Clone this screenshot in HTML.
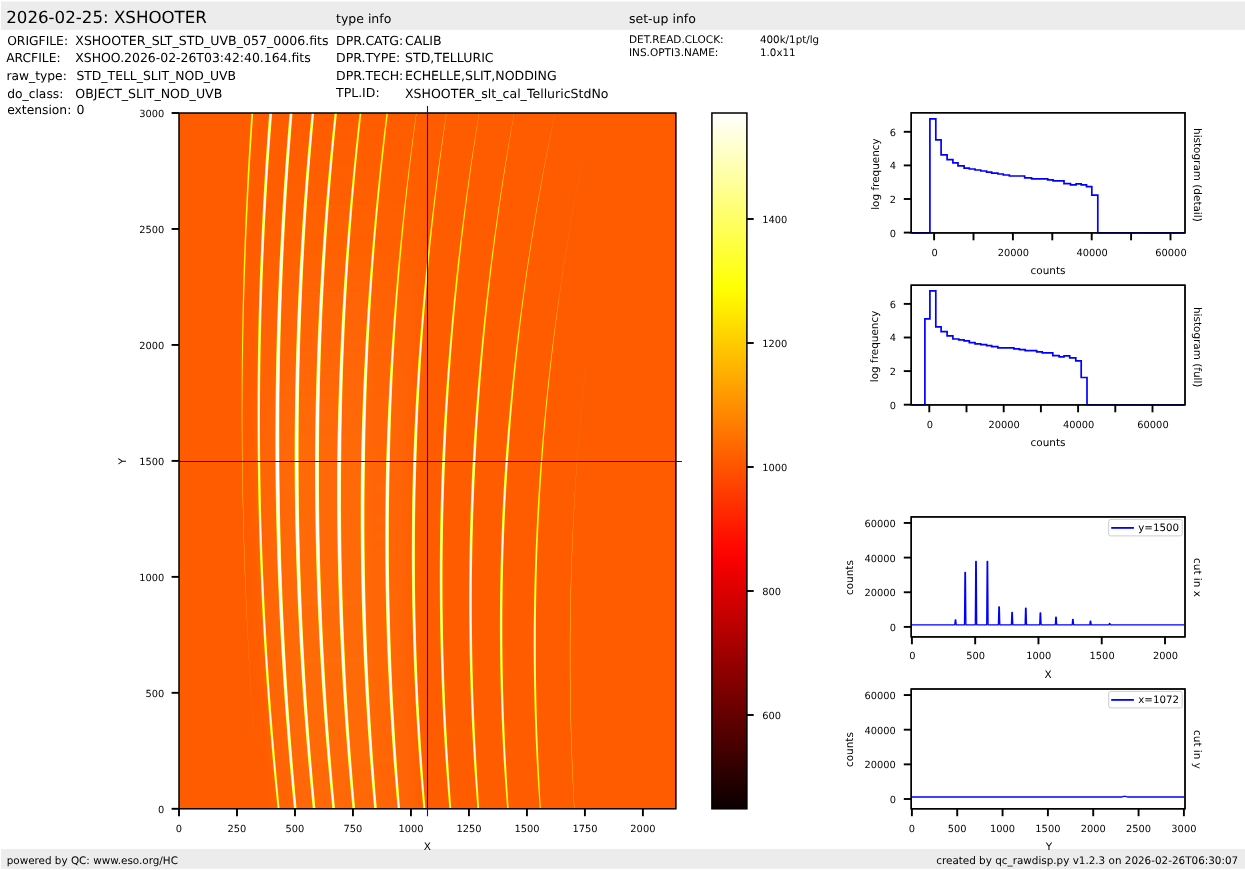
<!DOCTYPE html>
<html lang="en"><head><meta charset="utf-8"><title>XSHOOTER raw display</title>
<style>html,body{margin:0;padding:0;background:#fff}svg{display:block;will-change:transform;text-rendering:geometricPrecision}text{font-family:"DejaVu Sans", "Liberation Sans", sans-serif;fill:#000}</style></head><body>
<svg width="1245" height="870" viewBox="0 0 1245 870">
<defs>
<linearGradient id="cb" x1="0" y1="1" x2="0" y2="0"><stop offset="0.000" stop-color="#0b0000"/><stop offset="0.025" stop-color="#1b0000"/><stop offset="0.050" stop-color="#2c0000"/><stop offset="0.075" stop-color="#3d0000"/><stop offset="0.100" stop-color="#4e0000"/><stop offset="0.125" stop-color="#5e0000"/><stop offset="0.150" stop-color="#6f0000"/><stop offset="0.175" stop-color="#800000"/><stop offset="0.200" stop-color="#900000"/><stop offset="0.225" stop-color="#a10000"/><stop offset="0.250" stop-color="#b20000"/><stop offset="0.275" stop-color="#c30000"/><stop offset="0.300" stop-color="#d30000"/><stop offset="0.325" stop-color="#e40000"/><stop offset="0.350" stop-color="#f50000"/><stop offset="0.375" stop-color="#ff0700"/><stop offset="0.400" stop-color="#ff1700"/><stop offset="0.425" stop-color="#ff2800"/><stop offset="0.450" stop-color="#ff3900"/><stop offset="0.475" stop-color="#ff4a00"/><stop offset="0.500" stop-color="#ff5a00"/><stop offset="0.525" stop-color="#ff6b00"/><stop offset="0.550" stop-color="#ff7c00"/><stop offset="0.575" stop-color="#ff8d00"/><stop offset="0.600" stop-color="#ff9d00"/><stop offset="0.625" stop-color="#ffae00"/><stop offset="0.650" stop-color="#ffbf00"/><stop offset="0.675" stop-color="#ffcf00"/><stop offset="0.700" stop-color="#ffe000"/><stop offset="0.725" stop-color="#fff100"/><stop offset="0.750" stop-color="#ffff04"/><stop offset="0.775" stop-color="#ffff1d"/><stop offset="0.800" stop-color="#ffff36"/><stop offset="0.825" stop-color="#ffff4f"/><stop offset="0.850" stop-color="#ffff68"/><stop offset="0.875" stop-color="#ffff81"/><stop offset="0.900" stop-color="#ffff9b"/><stop offset="0.925" stop-color="#ffffb4"/><stop offset="0.950" stop-color="#ffffcd"/><stop offset="0.975" stop-color="#ffffe6"/><stop offset="1.000" stop-color="#ffffff"/></linearGradient>
<clipPath id="imclip"><rect x="179.0" y="113.0" width="496.9" height="695.8"/></clipPath>
<linearGradient id="fadeTop" gradientUnits="userSpaceOnUse" x1="0" y1="113" x2="0" y2="808"><stop offset="0" stop-color="#fff" stop-opacity="0.25"/><stop offset="0.35" stop-color="#fff" stop-opacity="1"/><stop offset="1" stop-color="#fff" stop-opacity="1"/></linearGradient>
<filter id="blur8" x="-20%" y="-20%" width="140%" height="140%"><feGaussianBlur stdDeviation="7 2"/></filter>
<filter id="blur1"><feGaussianBlur stdDeviation="0.6"/></filter>
</defs>
<rect x="0" y="0" width="1245" height="870" fill="#ffffff"/>
<rect x="1" y="1.5" width="1244" height="28.3" fill="#ececec"/>
<rect x="1" y="849" width="1244" height="19.8" fill="#ececec"/>
<text x="6.2" y="23.1" font-size="16.67" text-anchor="start">2026-02-25: XSHOOTER</text>
<text x="336" y="23" font-size="12.5" text-anchor="start">type info</text>
<text x="629" y="23" font-size="12.5" text-anchor="start">set-up info</text>
<text x="7.2" y="44.8" font-size="12.3" text-anchor="start">ORIGFILE:</text>
<text x="75.3" y="44.8" font-size="12.55" text-anchor="start">XSHOOTER_SLT_STD_UVB_057_0006.fits</text>
<text x="6.2" y="61.9" font-size="12.3" text-anchor="start">ARCFILE:</text>
<text x="75.3" y="61.9" font-size="12.45" text-anchor="start">XSHOO.2026-02-26T03:42:40.164.fits</text>
<text x="6.4" y="80.0" font-size="12.3" text-anchor="start">raw_type:</text>
<text x="76.4" y="80.0" font-size="12.4" text-anchor="start">STD_TELL_SLIT_NOD_UVB</text>
<text x="7.2" y="97.5" font-size="12.3" text-anchor="start">do_class:</text>
<text x="75.3" y="97.5" font-size="12.55" text-anchor="start">OBJECT_SLIT_NOD_UVB</text>
<text x="7.2" y="114.1" font-size="12.3" text-anchor="start">extension:</text>
<text x="76.4" y="114.1" font-size="12.55" text-anchor="start">0</text>
<text x="336" y="44.8" font-size="12.5" text-anchor="start">DPR.CATG:</text>
<text x="405" y="44.8" font-size="12.55" text-anchor="start">CALIB</text>
<text x="336" y="61.9" font-size="12.5" text-anchor="start">DPR.TYPE:</text>
<text x="405" y="61.9" font-size="12.55" text-anchor="start">STD,TELLURIC</text>
<text x="336" y="80.0" font-size="12.5" text-anchor="start">DPR.TECH:</text>
<text x="405" y="80.0" font-size="12.55" text-anchor="start">ECHELLE,SLIT,NODDING</text>
<text x="336" y="96.60000000000001" font-size="12.5" text-anchor="start">TPL.ID:</text>
<text x="405" y="97.9" font-size="12.55" text-anchor="start">XSHOOTER_slt_cal_TelluricStdNo</text>
<text x="629" y="43" font-size="10.5" text-anchor="start">DET.READ.CLOCK:</text>
<text x="760" y="43" font-size="10.3" text-anchor="start">400k/1pt/lg</text>
<text x="629" y="55.8" font-size="10.5" text-anchor="start">INS.OPTI3.NAME:</text>
<text x="760" y="55.8" font-size="10.3" text-anchor="start">1.0x11</text>
<text x="6.7" y="863.9" font-size="10.4" text-anchor="start">powered by QC: www.eso.org/HC</text>
<text x="1238.2" y="863.9" font-size="10.4" text-anchor="end">created by qc_rawdisp.py v1.2.3 on 2026-02-26T06:30:07</text>
<rect x="179.0" y="113.0" width="496.9" height="695.8" fill="#ff5c00"/>
<g clip-path="url(#imclip)">
<linearGradient id="glowv" gradientUnits="userSpaceOnUse" x1="0" y1="113" x2="0" y2="808.5"><stop offset="0" stop-color="#ff7c16" stop-opacity="0.04"/><stop offset="0.2" stop-color="#ff7c16" stop-opacity="0.22"/><stop offset="0.45" stop-color="#ff7c16" stop-opacity="0.5"/><stop offset="0.75" stop-color="#ff7c16" stop-opacity="0.6"/><stop offset="1" stop-color="#ff7c16" stop-opacity="0.5"/></linearGradient>
<path d="M271.2 83.0 L269.0 109.1 L267.0 135.1 L265.2 161.2 L263.6 187.2 L262.1 213.3 L260.8 239.4 L259.7 265.4 L258.8 291.5 L258.0 317.6 L257.4 343.6 L257.0 369.7 L256.8 395.7 L256.7 421.8 L256.9 447.9 L257.2 473.9 L257.6 500.0 L258.3 526.1 L259.1 552.1 L260.1 578.2 L261.3 604.2 L262.6 630.3 L264.2 656.4 L265.9 682.4 L267.8 708.5 L269.8 734.6 L272.0 760.6 L274.4 786.7 L277.0 812.7 L279.8 838.8 L421.2 838.8 L418.8 812.7 L416.6 786.7 L414.6 760.6 L412.9 734.6 L411.4 708.5 L410.2 682.4 L409.1 656.4 L408.3 630.3 L407.8 604.2 L407.4 578.2 L407.3 552.1 L407.5 526.1 L407.8 500.0 L408.4 473.9 L409.3 447.9 L410.3 421.8 L411.6 395.7 L413.1 369.7 L414.9 343.6 L416.9 317.6 L419.1 291.5 L421.5 265.4 L424.2 239.4 L427.1 213.3 L430.3 187.2 L433.6 161.2 L437.3 135.1 L441.1 109.1 L445.2 83.0Z" fill="url(#glowv)" opacity="0.55" filter="url(#blur8)"/>
<path d="M297.8 83.0 L295.4 109.1 L293.3 135.1 L291.3 161.2 L289.5 187.2 L287.9 213.3 L286.5 239.4 L285.2 265.4 L284.1 291.5 L283.2 317.6 L282.5 343.6 L281.9 369.7 L281.6 395.7 L281.4 421.8 L281.3 447.9 L281.5 473.9 L281.8 500.0 L282.3 526.1 L283.0 552.1 L283.9 578.2 L285.0 604.2 L286.2 630.3 L287.6 656.4 L289.2 682.4 L290.9 708.5 L292.8 734.6 L295.0 760.6 L297.2 786.7 L299.7 812.7 L302.4 838.8 L384.3 838.8 L381.9 812.7 L379.6 786.7 L377.6 760.6 L375.8 734.6 L374.2 708.5 L372.7 682.4 L371.5 656.4 L370.5 630.3 L369.7 604.2 L369.1 578.2 L368.7 552.1 L368.6 526.1 L368.6 500.0 L368.8 473.9 L369.3 447.9 L369.9 421.8 L370.7 395.7 L371.8 369.7 L373.1 343.6 L374.5 317.6 L376.2 291.5 L378.1 265.4 L380.2 239.4 L382.5 213.3 L385.0 187.2 L387.7 161.2 L390.6 135.1 L393.7 109.1 L397.0 83.0Z" fill="url(#glowv)" opacity="0.35" filter="url(#blur8)"/>
<path d="M251.47 112.0L250.68 123.8L249.93 135.7L249.22 147.5L248.53 159.3L247.88 171.1L247.26 183.0L246.67 194.8L246.11 206.6L245.58 218.4L245.09 230.3L244.63 242.1L244.20 253.9L243.80 265.8L243.44 277.6L243.11 289.4L242.82 301.2L242.57 313.1L242.34 324.9L242.15 336.7L242.00 348.5L241.87 360.4L241.78 372.2L241.72 384.0L241.69 395.9L241.69 407.7L241.72 419.5L241.79 431.3L241.89 443.2L242.02 455.0L242.17 466.8L242.34 478.6L242.55 490.5L242.78 502.3L243.05 514.1L243.36 525.9L243.69 537.8L244.05 549.6L244.45 561.4L244.88 573.3L245.34 585.1L245.84 596.9L246.36 608.7L246.92 620.6L247.51 632.4L248.13 644.2L248.78 656.0L249.46 667.9L250.17 679.7L250.92 691.5L251.70 703.4L252.51 715.2L253.35 727.0L254.22 738.8L254.24 738.8L253.38 727.0L252.55 715.2L251.75 703.4L250.98 691.5L250.25 679.7L249.55 667.9L248.88 656.0L248.24 644.2L247.63 632.4L247.06 620.6L246.52 608.7L246.02 596.9L245.54 585.1L245.10 573.3L244.69 561.4L244.31 549.6L243.96 537.8L243.65 525.9L243.37 514.1L243.12 502.3L242.90 490.5L242.71 478.6L242.56 466.8L242.45 455.0L242.38 443.2L242.35 431.3L242.34 419.5L242.37 407.7L242.43 395.9L242.52 384.0L242.65 372.2L242.80 360.4L242.99 348.5L243.21 336.7L243.46 324.9L243.75 313.1L244.07 301.2L244.41 289.4L244.78 277.6L245.18 265.8L245.61 253.9L246.07 242.1L246.57 230.3L247.09 218.4L247.65 206.6L248.24 194.8L248.86 183.0L249.52 171.1L250.21 159.3L250.92 147.5L251.67 135.7L252.46 123.8L253.27 112.0ZM269.27 112.0L268.37 123.8L267.49 135.7L266.66 147.5L265.86 159.3L265.09 171.1L264.37 183.0L263.68 194.8L263.02 206.6L262.40 218.4L261.82 230.3L261.27 242.1L260.76 253.9L260.29 265.8L259.85 277.6L259.45 289.4L259.09 301.2L258.77 313.1L258.48 324.9L258.23 336.7L258.02 348.5L257.84 360.4L257.70 372.2L257.60 384.0L257.53 395.9L257.49 407.7L257.50 419.5L257.54 431.3L257.61 443.2L257.73 455.0L257.87 466.8L258.03 478.6L258.24 490.5L258.48 502.3L258.76 514.1L259.07 525.9L259.42 537.8L259.80 549.6L260.23 561.4L260.68 573.3L261.18 585.1L261.71 596.9L262.27 608.7L262.88 620.6L263.52 632.4L264.20 644.2L264.92 656.0L265.68 667.9L266.47 679.7L267.30 691.5L268.17 703.4L269.07 715.2L270.01 727.0L270.99 738.8L272.00 750.7L273.05 762.5L274.17 774.3L275.32 786.1L276.51 798.0L277.73 809.8L279.74 809.8L278.59 798.0L277.48 786.1L276.40 774.3L275.37 762.5L274.34 750.7L273.34 738.8L272.38 727.0L271.46 715.2L270.57 703.4L269.72 691.5L268.90 679.7L268.12 667.9L267.38 656.0L266.67 644.2L266.00 632.4L265.35 620.6L264.75 608.7L264.17 596.9L263.64 585.1L263.14 573.3L262.67 561.4L262.25 549.6L261.86 537.8L261.50 525.9L261.18 514.1L260.90 502.3L260.65 490.5L260.44 478.6L260.27 466.8L260.14 455.0L260.05 443.2L260.01 431.3L259.99 419.5L260.02 407.7L260.08 395.9L260.17 384.0L260.31 372.2L260.47 360.4L260.68 348.5L260.92 336.7L261.20 324.9L261.51 313.1L261.86 301.2L262.25 289.4L262.66 277.6L263.11 265.8L263.60 253.9L264.13 242.1L264.69 230.3L265.28 218.4L265.92 206.6L266.59 194.8L267.29 183.0L268.03 171.1L268.81 159.3L269.62 147.5L270.47 135.7L271.36 123.8L272.28 112.0ZM289.68 112.0L288.67 123.8L287.70 135.7L286.77 147.5L285.87 159.3L285.00 171.1L284.18 183.0L283.39 194.8L282.64 206.6L281.92 218.4L281.24 230.3L280.60 242.1L279.99 253.9L279.42 265.8L278.89 277.6L278.39 289.4L277.94 301.2L277.52 313.1L277.14 324.9L276.80 336.7L276.49 348.5L276.22 360.4L275.99 372.2L275.79 384.0L275.63 395.9L275.51 407.7L275.42 419.5L275.37 431.3L275.35 443.2L275.37 455.0L275.44 466.8L275.57 478.6L275.73 490.5L275.92 502.3L276.15 514.1L276.42 525.9L276.72 537.8L277.07 549.6L277.44 561.4L277.86 573.3L278.31 585.1L278.80 596.9L279.32 608.7L279.88 620.6L280.48 632.4L281.12 644.2L281.80 656.0L282.52 667.9L283.28 679.7L284.07 691.5L284.90 703.4L285.77 715.2L286.67 727.0L287.61 738.8L288.59 750.7L289.60 762.5L290.67 774.3L291.78 786.1L292.92 798.0L294.10 809.8L296.75 809.8L295.66 798.0L294.62 786.1L293.61 774.3L292.63 762.5L291.68 750.7L290.75 738.8L289.87 727.0L289.02 715.2L288.20 703.4L287.43 691.5L286.69 679.7L285.98 667.9L285.32 656.0L284.69 644.2L284.09 632.4L283.52 620.6L282.98 608.7L282.49 596.9L282.03 585.1L281.60 573.3L281.21 561.4L280.86 549.6L280.55 537.8L280.27 525.9L280.03 514.1L279.83 502.3L279.66 490.5L279.53 478.6L279.43 466.8L279.36 455.0L279.31 443.2L279.30 431.3L279.32 419.5L279.38 407.7L279.48 395.9L279.61 384.0L279.78 372.2L279.99 360.4L280.24 348.5L280.52 336.7L280.83 324.9L281.19 313.1L281.58 301.2L282.00 289.4L282.46 277.6L282.95 265.8L283.48 253.9L284.05 242.1L284.65 230.3L285.29 218.4L285.97 206.6L286.68 194.8L287.43 183.0L288.21 171.1L289.03 159.3L289.89 147.5L290.79 135.7L291.72 123.8L292.69 112.0ZM311.67 112.0L310.53 123.8L309.43 135.7L308.36 147.5L307.34 159.3L306.35 171.1L305.40 183.0L304.50 194.8L303.63 206.6L302.80 218.4L302.01 230.3L301.25 242.1L300.54 253.9L299.87 265.8L299.23 277.6L298.64 289.4L298.10 301.2L297.60 313.1L297.13 324.9L296.71 336.7L296.32 348.5L295.97 360.4L295.66 372.2L295.40 384.0L295.17 395.9L294.97 407.7L294.82 419.5L294.71 431.3L294.64 443.2L294.60 455.0L294.62 466.8L294.69 478.6L294.81 490.5L294.96 502.3L295.15 514.1L295.38 525.9L295.65 537.8L295.96 549.6L296.30 561.4L296.69 573.3L297.12 585.1L297.58 596.9L298.08 608.7L298.63 620.6L299.21 632.4L299.84 644.2L300.51 656.0L301.22 667.9L301.97 679.7L302.76 691.5L303.59 703.4L304.46 715.2L305.37 727.0L306.31 738.8L307.30 750.7L308.33 762.5L309.41 774.3L310.54 786.1L311.70 798.0L312.90 809.8L315.56 809.8L314.44 798.0L313.38 786.1L312.35 774.3L311.36 762.5L310.39 750.7L309.46 738.8L308.57 727.0L307.71 715.2L306.89 703.4L306.12 691.5L305.38 679.7L304.68 667.9L304.02 656.0L303.40 644.2L302.82 632.4L302.26 620.6L301.75 608.7L301.27 596.9L300.83 585.1L300.43 573.3L300.07 561.4L299.75 549.6L299.47 537.8L299.23 525.9L299.03 514.1L298.86 502.3L298.74 490.5L298.65 478.6L298.61 466.8L298.59 455.0L298.59 443.2L298.63 431.3L298.71 419.5L298.83 407.7L298.99 395.9L299.18 384.0L299.42 372.2L299.70 360.4L300.01 348.5L300.36 336.7L300.76 324.9L301.19 313.1L301.66 301.2L302.17 289.4L302.71 277.6L303.29 265.8L303.90 253.9L304.55 242.1L305.25 230.3L305.98 218.4L306.75 206.6L307.56 194.8L308.41 183.0L309.29 171.1L310.22 159.3L311.19 147.5L312.19 135.7L313.24 123.8L314.32 112.0ZM334.74 112.0L333.48 123.8L332.26 135.7L331.08 147.5L329.94 159.3L328.85 171.1L327.79 183.0L326.78 194.8L325.80 206.6L324.87 218.4L323.98 230.3L323.13 242.1L322.32 253.9L321.55 265.8L320.82 277.6L320.14 289.4L319.51 301.2L318.92 313.1L318.37 324.9L317.86 336.7L317.39 348.5L316.97 360.4L316.58 372.2L316.24 384.0L315.93 395.9L315.67 407.7L315.45 419.5L315.27 431.3L315.13 443.2L315.03 455.0L315.00 466.8L315.01 478.6L315.08 490.5L315.18 502.3L315.32 514.1L315.50 525.9L315.73 537.8L315.99 549.6L316.30 561.4L316.65 573.3L317.04 585.1L317.47 596.9L317.94 608.7L318.45 620.6L319.00 632.4L319.61 644.2L320.25 656.0L320.94 667.9L321.67 679.7L322.44 691.5L323.26 703.4L324.11 715.2L325.00 727.0L325.94 738.8L326.92 750.7L327.94 762.5L329.02 774.3L330.14 786.1L331.30 798.0L332.50 809.8L335.16 809.8L334.04 798.0L332.98 786.1L331.95 774.3L330.97 762.5L330.01 750.7L329.08 738.8L328.20 727.0L327.36 715.2L326.56 703.4L325.80 691.5L325.08 679.7L324.40 667.9L323.76 656.0L323.17 644.2L322.61 632.4L322.09 620.6L321.60 608.7L321.16 596.9L320.75 585.1L320.39 573.3L320.07 561.4L319.79 549.6L319.55 537.8L319.35 525.9L319.20 514.1L319.08 502.3L319.01 490.5L318.97 478.6L318.98 466.8L319.01 455.0L319.07 443.2L319.16 431.3L319.30 419.5L319.48 407.7L319.70 395.9L319.96 384.0L320.26 372.2L320.60 360.4L320.98 348.5L321.41 336.7L321.87 324.9L322.38 313.1L322.93 301.2L323.51 289.4L324.13 277.6L324.79 265.8L325.49 253.9L326.23 242.1L327.01 230.3L327.83 218.4L328.69 206.6L329.60 194.8L330.54 183.0L331.53 171.1L332.55 159.3L333.62 147.5L334.73 135.7L335.88 123.8L337.07 112.0ZM359.73 112.0L358.37 123.8L357.06 135.7L355.78 147.5L354.55 159.3L353.36 171.1L352.21 183.0L351.10 194.8L350.03 206.6L349.00 218.4L348.02 230.3L347.08 242.1L346.18 253.9L345.32 265.8L344.50 277.6L343.72 289.4L342.99 301.2L342.30 313.1L341.66 324.9L341.05 336.7L340.49 348.5L339.97 360.4L339.49 372.2L339.05 384.0L338.65 395.9L338.29 407.7L337.98 419.5L337.71 431.3L337.47 443.2L337.28 455.0L337.16 466.8L337.10 478.6L337.08 490.5L337.11 502.3L337.17 514.1L337.28 525.9L337.43 537.8L337.62 549.6L337.85 561.4L338.13 573.3L338.44 585.1L338.80 596.9L339.20 608.7L339.64 620.6L340.12 632.4L340.65 644.2L341.23 656.0L341.85 667.9L342.51 679.7L343.21 691.5L343.95 703.4L344.74 715.2L345.56 727.0L346.43 738.8L347.34 750.7L348.29 762.5L349.31 774.3L350.36 786.1L351.46 798.0L352.60 809.8L355.25 809.8L354.20 798.0L353.20 786.1L352.24 774.3L351.32 762.5L350.43 750.7L349.57 738.8L348.76 727.0L347.98 715.2L347.25 703.4L346.56 691.5L345.91 679.7L345.30 667.9L344.74 656.0L344.21 644.2L343.73 632.4L343.27 620.6L342.86 608.7L342.49 596.9L342.16 585.1L341.87 573.3L341.62 561.4L341.42 549.6L341.26 537.8L341.13 525.9L341.05 514.1L341.01 502.3L341.02 490.5L341.06 478.6L341.15 466.8L341.25 455.0L341.37 443.2L341.53 431.3L341.73 419.5L341.98 407.7L342.26 395.9L342.59 384.0L342.96 372.2L343.37 360.4L343.82 348.5L344.31 336.7L344.85 324.9L345.42 313.1L346.04 301.2L346.70 289.4L347.40 277.6L348.14 265.8L348.91 253.9L349.73 242.1L350.60 230.3L351.50 218.4L352.44 206.6L353.43 194.8L354.46 183.0L355.53 171.1L356.64 159.3L357.79 147.5L358.98 135.7L360.22 123.8L361.50 112.0ZM386.66 112.0L385.19 123.8L383.76 135.7L382.38 147.5L381.03 159.3L379.73 171.1L378.47 183.0L377.26 194.8L376.08 206.6L374.95 218.4L373.86 230.3L372.81 242.1L371.81 253.9L370.85 265.8L369.93 277.6L369.05 289.4L368.21 301.2L367.42 313.1L366.67 324.9L365.96 336.7L365.29 348.5L364.67 360.4L364.08 372.2L363.54 384.0L363.05 395.9L362.59 407.7L362.18 419.5L361.81 431.3L361.48 443.2L361.19 455.0L360.98 466.8L360.83 478.6L360.73 490.5L360.67 502.3L360.65 514.1L360.67 525.9L360.74 537.8L360.84 549.6L360.99 561.4L361.19 573.3L361.42 585.1L361.70 596.9L362.02 608.7L362.38 620.6L362.79 632.4L363.25 644.2L363.75 656.0L364.30 667.9L364.89 679.7L365.53 691.5L366.21 703.4L366.92 715.2L367.69 727.0L368.49 738.8L369.33 750.7L370.23 762.5L371.18 774.3L372.18 786.1L373.21 798.0L374.29 809.8L376.94 809.8L375.95 798.0L375.01 786.1L374.11 774.3L373.26 762.5L372.42 750.7L371.63 738.8L370.88 727.0L370.17 715.2L369.50 703.4L368.88 691.5L368.30 679.7L367.76 667.9L367.26 656.0L366.81 644.2L366.39 632.4L366.01 620.6L365.66 608.7L365.36 596.9L365.10 585.1L364.89 573.3L364.71 561.4L364.58 549.6L364.49 537.8L364.44 525.9L364.44 514.1L364.48 502.3L364.56 490.5L364.68 478.6L364.85 466.8L365.03 455.0L365.23 443.2L365.46 431.3L365.74 419.5L366.07 407.7L366.43 395.9L366.84 384.0L367.29 372.2L367.79 360.4L368.32 348.5L368.90 336.7L369.52 324.9L370.18 313.1L370.89 301.2L371.64 289.4L372.43 277.6L373.26 265.8L374.14 253.9L375.06 242.1L376.02 230.3L377.03 218.4L378.08 206.6L379.17 194.8L380.30 183.0L381.47 171.1L382.69 159.3L383.95 147.5L385.25 135.7L386.60 123.8L387.99 112.0ZM416.42 112.0L414.75 123.8L413.13 135.7L411.55 147.5L410.02 159.3L408.53 171.1L407.09 183.0L405.69 194.8L404.34 206.6L403.04 218.4L401.78 230.3L400.56 242.1L399.39 253.9L398.27 265.8L397.19 277.6L396.16 289.4L395.16 301.2L394.22 313.1L393.31 324.9L392.46 336.7L391.65 348.5L390.88 360.4L390.16 372.2L389.49 384.0L388.86 395.9L388.27 407.7L387.74 419.5L387.24 431.3L386.80 443.2L386.39 455.0L386.07 466.8L385.82 478.6L385.62 490.5L385.46 502.3L385.35 514.1L385.28 525.9L385.26 537.8L385.28 549.6L385.35 561.4L385.46 573.3L385.62 585.1L385.83 596.9L386.08 608.7L386.38 620.6L386.72 632.4L387.12 644.2L387.58 656.0L388.08 667.9L388.63 679.7L389.22 691.5L389.86 703.4L390.54 715.2L391.27 727.0L392.04 738.8L392.86 750.7L393.73 762.5L394.68 774.3L395.66 786.1L396.70 798.0L397.77 809.8L400.26 809.8L399.29 798.0L398.38 786.1L397.50 774.3L396.68 762.5L395.87 750.7L395.10 738.8L394.38 727.0L393.71 715.2L393.08 703.4L392.49 691.5L391.95 679.7L391.46 667.9L391.01 656.0L390.60 644.2L390.24 632.4L389.90 620.6L389.61 608.7L389.37 596.9L389.17 585.1L389.01 573.3L388.90 561.4L388.84 549.6L388.82 537.8L388.85 525.9L388.92 514.1L389.04 502.3L389.20 490.5L389.41 478.6L389.67 466.8L389.93 455.0L390.22 443.2L390.55 431.3L390.92 419.5L391.34 407.7L391.80 395.9L392.31 384.0L392.87 372.2L393.47 360.4L394.12 348.5L394.81 336.7L395.54 324.9L396.33 313.1L397.15 301.2L398.03 289.4L398.95 277.6L399.92 265.8L400.94 253.9L402.00 242.1L403.10 230.3L404.25 218.4L405.45 206.6L406.69 194.8L407.98 183.0L409.31 171.1L410.69 159.3L412.11 147.5L413.58 135.7L415.10 123.8L416.66 112.0ZM446.57 112.0L444.75 123.8L442.98 135.7L441.25 147.5L439.57 159.3L437.94 171.1L436.36 183.0L434.82 194.8L433.33 206.6L431.89 218.4L430.50 230.3L429.16 242.1L427.86 253.9L426.61 265.8L425.41 277.6L424.26 289.4L423.17 301.2L422.14 313.1L421.15 324.9L420.21 336.7L419.32 348.5L418.47 360.4L417.67 372.2L416.92 384.0L416.22 395.9L415.57 407.7L414.96 419.5L414.40 431.3L413.89 443.2L413.43 455.0L413.03 466.8L412.72 478.6L412.44 490.5L412.22 502.3L412.04 514.1L411.92 525.9L411.84 537.8L411.80 549.6L411.82 561.4L411.88 573.3L411.99 585.1L412.15 596.9L412.35 608.7L412.61 620.6L412.91 632.4L413.26 644.2L413.67 656.0L414.12 667.9L414.62 679.7L415.16 691.5L415.76 703.4L416.40 715.2L417.09 727.0L417.83 738.8L418.61 750.7L419.45 762.5L420.39 774.3L421.37 786.1L422.40 798.0L423.47 809.8L425.56 809.8L424.61 798.0L423.72 786.1L422.87 774.3L422.07 762.5L421.28 750.7L420.52 738.8L419.82 727.0L419.16 715.2L418.54 703.4L417.98 691.5L417.46 679.7L416.99 667.9L416.57 656.0L416.20 644.2L415.87 632.4L415.59 620.6L415.35 608.7L415.16 596.9L415.02 585.1L414.92 573.3L414.88 561.4L414.88 549.6L414.93 537.8L415.03 525.9L415.17 514.1L415.36 502.3L415.60 490.5L415.89 478.6L416.23 466.8L416.59 455.0L416.97 443.2L417.40 431.3L417.88 419.5L418.40 407.7L418.98 395.9L419.60 384.0L420.27 372.2L420.98 360.4L421.75 348.5L422.56 336.7L423.42 324.9L424.33 313.1L425.28 301.2L426.28 289.4L427.32 277.6L428.39 265.8L429.52 253.9L430.69 242.1L431.91 230.3L433.18 218.4L434.49 206.6L435.85 194.8L437.26 183.0L438.72 171.1L440.23 159.3L441.78 147.5L443.38 135.7L445.03 123.8L446.73 112.0ZM479.20 112.0L477.25 123.8L475.34 135.7L473.48 147.5L471.67 159.3L469.91 171.1L468.20 183.0L466.53 194.8L464.92 206.6L463.35 218.4L461.83 230.3L460.37 242.1L458.95 253.9L457.58 265.8L456.25 277.6L454.98 289.4L453.77 301.2L452.61 313.1L451.49 324.9L450.43 336.7L449.41 348.5L448.44 360.4L447.52 372.2L446.65 384.0L445.83 395.9L445.05 407.7L444.33 419.5L443.65 431.3L443.02 443.2L442.45 455.0L441.94 466.8L441.50 478.6L441.12 490.5L440.78 502.3L440.49 514.1L440.25 525.9L440.06 537.8L439.92 549.6L439.83 561.4L439.78 573.3L439.79 585.1L439.84 596.9L439.94 608.7L440.09 620.6L440.29 632.4L440.54 644.2L440.84 656.0L441.19 667.9L441.59 679.7L442.04 691.5L442.54 703.4L443.09 715.2L443.68 727.0L444.32 738.8L445.02 750.7L445.77 762.5L446.61 774.3L447.51 786.1L448.45 798.0L449.44 809.8L451.37 809.8L450.50 798.0L449.70 786.1L448.94 774.3L448.23 762.5L447.52 750.7L446.85 738.8L446.23 727.0L445.65 715.2L445.13 703.4L444.66 691.5L444.23 679.7L443.85 667.9L443.52 656.0L443.24 644.2L443.01 632.4L442.82 620.6L442.68 608.7L442.59 596.9L442.55 585.1L442.56 573.3L442.61 561.4L442.72 549.6L442.87 537.8L443.07 525.9L443.33 514.1L443.62 502.3L443.97 490.5L444.37 478.6L444.82 466.8L445.29 455.0L445.79 443.2L446.33 431.3L446.93 419.5L447.57 407.7L448.26 395.9L449.00 384.0L449.79 372.2L450.63 360.4L451.52 348.5L452.46 336.7L453.44 324.9L454.47 313.1L455.56 301.2L456.69 289.4L457.86 277.6L459.07 265.8L460.34 253.9L461.65 242.1L463.02 230.3L464.43 218.4L465.89 206.6L467.40 194.8L468.95 183.0L470.56 171.1L472.21 159.3L473.92 147.5L475.67 135.7L477.47 123.8L479.32 112.0ZM514.33 112.0L512.20 123.8L510.11 135.7L508.08 147.5L506.10 159.3L504.16 171.1L502.28 183.0L500.46 194.8L498.68 206.6L496.95 218.4L495.28 230.3L493.65 242.1L492.08 253.9L490.56 265.8L489.09 277.6L487.67 289.4L486.29 301.2L484.97 313.1L483.69 324.9L482.47 336.7L481.30 348.5L480.18 360.4L479.11 372.2L478.09 384.0L477.12 395.9L476.21 407.7L475.34 419.5L474.53 431.3L473.77 443.2L473.06 455.0L472.42 466.8L471.87 478.6L471.37 490.5L470.92 502.3L470.52 514.1L470.17 525.9L469.87 537.8L469.63 549.6L469.43 561.4L469.29 573.3L469.20 585.1L469.15 596.9L469.16 608.7L469.22 620.6L469.34 632.4L469.50 644.2L469.72 656.0L470.00 667.9L470.32 679.7L470.69 691.5L471.12 703.4L471.59 715.2L472.12 727.0L472.70 738.8L473.33 750.7L474.02 762.5L474.82 774.3L475.67 786.1L476.57 798.0L477.52 809.8L479.28 809.8L478.48 798.0L477.73 786.1L477.04 774.3L476.39 762.5L475.75 750.7L475.14 738.8L474.59 727.0L474.08 715.2L473.63 703.4L473.23 691.5L472.87 679.7L472.57 667.9L472.32 656.0L472.13 644.2L471.98 632.4L471.88 620.6L471.83 608.7L471.83 596.9L471.88 585.1L471.98 573.3L472.14 561.4L472.35 549.6L472.60 537.8L472.91 525.9L473.27 514.1L473.68 502.3L474.14 490.5L474.66 478.6L475.22 466.8L475.81 455.0L476.42 443.2L477.08 431.3L477.80 419.5L478.56 407.7L479.38 395.9L480.24 384.0L481.16 372.2L482.13 360.4L483.15 348.5L484.22 336.7L485.34 324.9L486.52 313.1L487.74 301.2L489.02 289.4L490.35 277.6L491.74 265.8L493.18 253.9L494.67 242.1L496.21 230.3L497.80 218.4L499.44 206.6L501.14 194.8L502.88 183.0L504.68 171.1L506.53 159.3L508.42 147.5L510.37 135.7L512.37 123.8L514.43 112.0ZM555.18 112.0L552.70 123.8L550.28 135.7L547.91 147.5L545.60 159.3L543.35 171.1L541.15 183.0L539.02 194.8L536.93 206.6L534.91 218.4L532.95 230.3L531.04 242.1L529.18 253.9L527.39 265.8L525.65 277.6L523.96 289.4L522.30 301.2L520.70 313.1L519.15 324.9L517.66 336.7L516.23 348.5L514.86 360.4L513.54 372.2L512.28 384.0L511.08 395.9L509.93 407.7L508.84 419.5L507.81 431.3L506.84 443.2L505.92 455.0L505.09 466.8L504.35 478.6L503.66 490.5L503.03 502.3L502.46 514.1L501.95 525.9L501.49 537.8L501.09 549.6L500.75 561.4L500.46 573.3L500.24 585.1L500.06 596.9L499.95 608.7L499.89 620.6L499.89 632.4L499.96 644.2L500.09 656.0L500.27 667.9L500.52 679.7L500.82 691.5L501.17 703.4L501.58 715.2L502.06 727.0L502.58 738.8L503.17 750.7L503.82 762.5L504.59 774.3L505.42 786.1L506.30 798.0L507.23 809.8L508.76 809.8L507.98 798.0L507.26 786.1L506.60 774.3L505.99 762.5L505.39 750.7L504.83 738.8L504.33 727.0L503.89 715.2L503.50 703.4L503.17 691.5L502.90 679.7L502.68 667.9L502.52 656.0L502.42 644.2L502.37 632.4L502.37 620.6L502.43 608.7L502.55 596.9L502.72 585.1L502.95 573.3L503.23 561.4L503.57 549.6L503.97 537.8L504.43 525.9L504.95 514.1L505.52 502.3L506.15 490.5L506.83 478.6L507.58 466.8L508.35 455.0L509.15 443.2L510.00 431.3L510.91 419.5L511.88 407.7L512.91 395.9L513.99 384.0L515.13 372.2L516.33 360.4L517.58 348.5L518.90 336.7L520.27 324.9L521.69 313.1L523.18 301.2L524.72 289.4L526.34 277.6L528.04 265.8L529.79 253.9L531.59 242.1L533.46 230.3L535.38 218.4L537.36 206.6L539.39 194.8L541.48 183.0L543.63 171.1L545.84 159.3L548.10 147.5L550.43 135.7L552.80 123.8L555.24 112.0ZM584.79 147.5L582.42 159.3L580.12 171.1L577.87 183.0L575.68 194.8L573.54 206.6L571.46 218.4L569.44 230.3L567.48 242.1L565.57 253.9L563.72 265.8L561.93 277.6L560.18 289.4L558.46 301.2L556.80 313.1L555.20 324.9L553.65 336.7L552.16 348.5L550.73 360.4L549.35 372.2L548.03 384.0L546.77 395.9L545.57 407.7L544.42 419.5L543.33 431.3L542.29 443.2L541.32 455.0L540.40 466.8L539.55 478.6L538.76 490.5L538.02 502.3L537.34 514.1L536.72 525.9L536.16 537.8L535.65 549.6L535.20 561.4L534.80 573.3L534.46 585.1L534.18 596.9L533.96 608.7L533.79 620.6L533.68 632.4L533.67 644.2L533.72 656.0L533.83 667.9L534.00 679.7L534.22 691.5L534.50 703.4L534.84 715.2L535.24 727.0L535.69 738.8L536.20 750.7L536.78 762.5L537.48 774.3L538.23 786.1L539.05 798.0L539.91 809.8L540.87 809.8L540.19 798.0L539.57 786.1L539.01 774.3L538.50 762.5L537.99 750.7L537.52 738.8L537.11 727.0L536.76 715.2L536.46 703.4L536.22 691.5L536.04 679.7L535.92 667.9L535.85 656.0L535.84 644.2L535.87 632.4L535.92 620.6L536.03 608.7L536.20 596.9L536.42 585.1L536.71 573.3L537.04 561.4L537.44 549.6L537.89 537.8L538.40 525.9L538.96 514.1L539.59 502.3L540.26 490.5L541.00 478.6L541.79 466.8L542.64 455.0L543.53 443.2L544.48 431.3L545.49 419.5L546.55 407.7L547.67 395.9L548.85 384.0L550.09 372.2L551.38 360.4L552.73 348.5L554.13 336.7L555.59 324.9L557.11 313.1L558.69 301.2L560.32 289.4L562.04 277.6L563.83 265.8L565.67 253.9L567.57 242.1L569.52 230.3L571.54 218.4L573.61 206.6L575.73 194.8L577.92 183.0L580.16 171.1L582.46 159.3L584.81 147.5ZM588.70 336.7L587.35 348.5L586.04 360.4L584.78 372.2L583.58 384.0L582.42 395.9L581.32 407.7L580.27 419.5L579.27 431.3L578.32 443.2L577.42 455.0L576.57 466.8L575.76 478.6L575.01 490.5L574.31 502.3L573.66 514.1L573.06 525.9L572.51 537.8L572.01 549.6L571.57 561.4L571.17 573.3L570.83 585.1L570.53 596.9L570.29 608.7L570.10 620.6L569.96 632.4L569.88 644.2L569.86 656.0L569.89 667.9L569.97 679.7L570.09 691.5L570.28 703.4L570.51 715.2L570.79 727.0L571.12 738.8L571.51 750.7L571.95 762.5L572.45 774.3L573.01 786.1L573.62 798.0L574.27 809.8L574.47 809.8L573.85 798.0L573.28 786.1L572.77 774.3L572.30 762.5L571.87 750.7L571.49 738.8L571.16 727.0L570.88 715.2L570.65 703.4L570.48 691.5L570.35 679.7L570.28 667.9L570.25 656.0L570.28 644.2L570.36 632.4L570.48 620.6L570.64 608.7L570.86 596.9L571.14 585.1L571.46 573.3L571.83 561.4L572.26 549.6L572.73 537.8L573.26 525.9L573.84 514.1L574.46 502.3L575.14 490.5L575.88 478.6L576.66 466.8L577.50 455.0L578.39 443.2L579.33 431.3L580.33 419.5L581.37 407.7L582.47 395.9L583.62 384.0L584.82 372.2L586.07 360.4L587.37 348.5L588.73 336.7Z" fill="#ffff00"/>
<path d="M252.24 112.0L251.46 123.8L250.72 135.7L250.00 147.5L249.32 159.3L248.67 171.1L248.72 171.1L249.41 159.3L250.14 147.5L250.89 135.7L251.68 123.8L252.50 112.0ZM269.87 112.0L268.96 123.8L268.09 135.7L267.26 147.5L266.46 159.3L265.70 171.1L264.97 183.0L264.29 194.8L263.63 206.6L263.02 218.4L262.44 230.3L261.89 242.1L261.38 253.9L260.91 265.8L260.47 277.6L260.08 289.4L259.72 301.2L259.40 313.1L259.12 324.9L258.88 336.7L258.67 348.5L258.49 360.4L258.35 372.2L258.25 384.0L258.19 395.9L258.16 407.7L258.17 419.5L258.21 431.3L258.29 443.2L258.41 455.0L258.55 466.8L258.72 478.6L258.92 490.5L259.16 502.3L259.44 514.1L259.75 525.9L260.10 537.8L260.48 549.6L260.90 561.4L261.36 573.3L261.85 585.1L262.38 596.9L262.95 608.7L263.55 620.6L264.19 632.4L264.87 644.2L265.60 656.0L266.36 667.9L267.15 679.7L267.99 691.5L268.86 703.4L269.76 715.2L270.70 727.0L271.68 738.8L272.69 750.7L273.75 762.5L274.88 774.3L276.04 786.1L277.24 798.0L278.47 809.8L278.99 809.8L277.85 798.0L276.75 786.1L275.69 774.3L274.67 762.5L273.64 750.7L272.65 738.8L271.69 727.0L270.77 715.2L269.88 703.4L269.03 691.5L268.22 679.7L267.44 667.9L266.70 656.0L266.00 644.2L265.33 632.4L264.68 620.6L264.07 608.7L263.50 596.9L262.96 585.1L262.46 573.3L262.00 561.4L261.57 549.6L261.18 537.8L260.82 525.9L260.50 514.1L260.22 502.3L259.97 490.5L259.76 478.6L259.59 466.8L259.46 455.0L259.38 443.2L259.33 431.3L259.32 419.5L259.35 407.7L259.42 395.9L259.52 384.0L259.65 372.2L259.82 360.4L260.03 348.5L260.28 336.7L260.56 324.9L260.88 313.1L261.23 301.2L261.62 289.4L262.04 277.6L262.49 265.8L262.98 253.9L263.51 242.1L264.07 230.3L264.67 218.4L265.30 206.6L265.98 194.8L266.68 183.0L267.43 171.1L268.21 159.3L269.02 147.5L269.87 135.7L270.76 123.8L271.69 112.0ZM290.28 112.0L289.27 123.8L288.29 135.7L287.35 147.5L286.44 159.3L285.57 171.1L284.74 183.0L283.95 194.8L283.19 206.6L282.47 218.4L281.78 230.3L281.13 242.1L280.52 253.9L279.94 265.8L279.40 277.6L278.90 289.4L278.44 301.2L278.02 313.1L277.64 324.9L277.29 336.7L276.98 348.5L276.71 360.4L276.47 372.2L276.27 384.0L276.10 395.9L275.97 407.7L275.88 419.5L275.83 431.3L275.81 443.2L275.82 455.0L275.90 466.8L276.02 478.6L276.19 490.5L276.38 502.3L276.62 514.1L276.89 525.9L277.20 537.8L277.55 549.6L277.93 561.4L278.35 573.3L278.80 585.1L279.29 596.9L279.82 608.7L280.39 620.6L280.99 632.4L281.64 644.2L282.33 656.0L283.06 667.9L283.82 679.7L284.62 691.5L285.46 703.4L286.33 715.2L287.24 727.0L288.19 738.8L289.17 750.7L290.20 762.5L291.28 774.3L292.40 786.1L293.56 798.0L294.75 809.8L296.10 809.8L295.03 798.0L293.99 786.1L293.00 774.3L292.04 762.5L291.09 750.7L290.18 738.8L289.30 727.0L288.46 715.2L287.65 703.4L286.88 691.5L286.15 679.7L285.45 667.9L284.79 656.0L284.17 644.2L283.58 632.4L283.01 620.6L282.48 608.7L281.99 596.9L281.53 585.1L281.11 573.3L280.73 561.4L280.38 549.6L280.07 537.8L279.80 525.9L279.56 514.1L279.36 502.3L279.20 490.5L279.07 478.6L278.98 466.8L278.91 455.0L278.85 443.2L278.84 431.3L278.86 419.5L278.92 407.7L279.01 395.9L279.14 384.0L279.31 372.2L279.51 360.4L279.75 348.5L280.02 336.7L280.34 324.9L280.69 313.1L281.07 301.2L281.49 289.4L281.95 277.6L282.43 265.8L282.96 253.9L283.52 242.1L284.11 230.3L284.75 218.4L285.42 206.6L286.12 194.8L286.87 183.0L287.65 171.1L288.46 159.3L289.31 147.5L290.20 135.7L291.13 123.8L292.09 112.0ZM312.32 112.0L311.17 123.8L310.06 135.7L308.99 147.5L307.95 159.3L306.96 171.1L306.00 183.0L305.08 194.8L304.21 206.6L303.37 218.4L302.57 230.3L301.81 242.1L301.09 253.9L300.40 265.8L299.76 277.6L299.16 289.4L298.61 301.2L298.11 313.1L297.64 324.9L297.21 336.7L296.81 348.5L296.46 360.4L296.15 372.2L295.88 384.0L295.64 395.9L295.45 407.7L295.29 419.5L295.17 431.3L295.09 443.2L295.05 455.0L295.07 466.8L295.15 478.6L295.27 490.5L295.42 502.3L295.62 514.1L295.85 525.9L296.12 537.8L296.44 549.6L296.79 561.4L297.18 573.3L297.61 585.1L298.08 596.9L298.58 608.7L299.13 620.6L299.72 632.4L300.35 644.2L301.03 656.0L301.75 667.9L302.51 679.7L303.31 691.5L304.15 703.4L305.02 715.2L305.94 727.0L306.89 738.8L307.89 750.7L308.92 762.5L310.02 774.3L311.16 786.1L312.34 798.0L313.55 809.8L314.90 809.8L313.81 798.0L312.75 786.1L311.74 774.3L310.77 762.5L309.81 750.7L308.88 738.8L308.00 727.0L307.15 715.2L306.34 703.4L305.57 691.5L304.84 679.7L304.15 667.9L303.50 656.0L302.89 644.2L302.31 632.4L301.76 620.6L301.25 608.7L300.77 596.9L300.34 585.1L299.95 573.3L299.59 561.4L299.27 549.6L299.00 537.8L298.76 525.9L298.56 514.1L298.40 502.3L298.28 490.5L298.20 478.6L298.16 466.8L298.13 455.0L298.13 443.2L298.17 431.3L298.24 419.5L298.36 407.7L298.51 395.9L298.70 384.0L298.93 372.2L299.21 360.4L299.52 348.5L299.86 336.7L300.25 324.9L300.68 313.1L301.15 301.2L301.65 289.4L302.18 277.6L302.75 265.8L303.35 253.9L304.00 242.1L304.68 230.3L305.40 218.4L306.17 206.6L306.97 194.8L307.81 183.0L308.69 171.1L309.60 159.3L310.56 147.5L311.56 135.7L312.59 123.8L313.67 112.0ZM335.44 112.0L334.17 123.8L332.94 135.7L331.75 147.5L330.60 159.3L329.49 171.1L328.43 183.0L327.40 194.8L326.42 206.6L325.48 218.4L324.57 230.3L323.71 242.1L322.89 253.9L322.11 265.8L321.38 277.6L320.68 289.4L320.05 301.2L319.45 313.1L318.89 324.9L318.38 336.7L317.90 348.5L317.47 360.4L317.08 372.2L316.73 384.0L316.42 395.9L316.15 407.7L315.92 419.5L315.74 431.3L315.59 443.2L315.49 455.0L315.45 466.8L315.47 478.6L315.54 490.5L315.64 502.3L315.79 514.1L315.98 525.9L316.20 537.8L316.47 549.6L316.78 561.4L317.14 573.3L317.53 585.1L317.96 596.9L318.44 608.7L318.95 620.6L319.51 632.4L320.12 644.2L320.78 656.0L321.47 667.9L322.21 679.7L322.99 691.5L323.81 703.4L324.67 715.2L325.57 727.0L326.52 738.8L327.50 750.7L328.53 762.5L329.63 774.3L330.76 786.1L331.94 798.0L333.15 809.8L334.50 809.8L333.41 798.0L332.35 786.1L331.34 774.3L330.37 762.5L329.42 750.7L328.51 738.8L327.63 727.0L326.80 715.2L326.00 703.4L325.25 691.5L324.54 679.7L323.87 667.9L323.24 656.0L322.65 644.2L322.10 632.4L321.58 620.6L321.10 608.7L320.66 596.9L320.26 585.1L319.90 573.3L319.59 561.4L319.31 549.6L319.08 537.8L318.88 525.9L318.73 514.1L318.62 502.3L318.55 490.5L318.52 478.6L318.53 466.8L318.56 455.0L318.61 443.2L318.70 431.3L318.83 419.5L319.00 407.7L319.21 395.9L319.47 384.0L319.76 372.2L320.10 360.4L320.47 348.5L320.89 336.7L321.35 324.9L321.85 313.1L322.39 301.2L322.97 289.4L323.58 277.6L324.23 265.8L324.92 253.9L325.64 242.1L326.41 230.3L327.22 218.4L328.08 206.6L328.97 194.8L329.90 183.0L330.88 171.1L331.89 159.3L332.95 147.5L334.05 135.7L335.19 123.8L336.37 112.0ZM360.51 112.0L359.14 123.8L357.81 135.7L356.53 147.5L355.28 159.3L354.08 171.1L352.92 183.0L351.79 194.8L350.71 206.6L349.68 218.4L348.68 230.3L347.73 242.1L346.81 253.9L345.94 265.8L345.11 277.6L344.32 289.4L343.58 301.2L342.88 313.1L342.23 324.9L341.61 336.7L341.04 348.5L340.50 360.4L340.01 372.2L339.56 384.0L339.16 395.9L338.79 407.7L338.46 419.5L338.18 431.3L337.94 443.2L337.74 455.0L337.61 466.8L337.56 478.6L337.54 490.5L337.57 502.3L337.64 514.1L337.75 525.9L337.91 537.8L338.10 549.6L338.34 561.4L338.62 573.3L338.94 585.1L339.30 596.9L339.70 608.7L340.14 620.6L340.63 632.4L341.17 644.2L341.75 656.0L342.38 667.9L343.05 679.7L343.76 691.5L344.51 703.4L345.30 715.2L346.13 727.0L347.01 738.8L347.92 750.7L348.89 762.5L349.92 774.3L350.99 786.1L352.10 798.0L353.25 809.8L354.60 809.8L353.56 798.0L352.58 786.1L351.63 774.3L350.73 762.5L349.84 750.7L349.00 738.8L348.19 727.0L347.42 715.2L346.70 703.4L346.02 691.5L345.37 679.7L344.77 667.9L344.22 656.0L343.70 644.2L343.22 632.4L342.77 620.6L342.36 608.7L341.99 596.9L341.67 585.1L341.38 573.3L341.14 561.4L340.94 549.6L340.78 537.8L340.66 525.9L340.58 514.1L340.55 502.3L340.56 490.5L340.60 478.6L340.69 466.8L340.79 455.0L340.90 443.2L341.05 431.3L341.25 419.5L341.48 407.7L341.75 395.9L342.07 384.0L342.43 372.2L342.83 360.4L343.27 348.5L343.75 336.7L344.28 324.9L344.85 313.1L345.45 301.2L346.10 289.4L346.79 277.6L347.51 265.8L348.28 253.9L349.09 242.1L349.94 230.3L350.83 218.4L351.76 206.6L352.73 194.8L353.75 183.0L354.81 171.1L355.90 159.3L357.04 147.5L358.23 135.7L359.45 123.8L360.72 112.0ZM381.83 159.3L380.52 171.1L379.24 183.0L378.01 194.8L376.83 206.6L375.68 218.4L374.58 230.3L373.52 242.1L372.51 253.9L371.53 265.8L370.60 277.6L369.71 289.4L368.86 301.2L368.05 313.1L367.29 324.9L366.56 336.7L365.88 348.5L365.25 360.4L364.65 372.2L364.10 384.0L363.59 395.9L363.12 407.7L362.69 419.5L362.31 431.3L361.97 443.2L361.67 455.0L361.45 466.8L361.30 478.6L361.20 490.5L361.14 502.3L361.13 514.1L361.15 525.9L361.22 537.8L361.33 549.6L361.48 561.4L361.68 573.3L361.92 585.1L362.20 596.9L362.52 608.7L362.89 620.6L363.29 632.4L363.76 644.2L364.28 656.0L364.83 667.9L365.43 679.7L366.07 691.5L366.76 703.4L367.49 715.2L368.25 727.0L369.07 738.8L369.92 750.7L370.82 762.5L371.79 774.3L372.80 786.1L373.85 798.0L374.94 809.8L376.29 809.8L375.32 798.0L374.39 786.1L373.50 774.3L372.66 762.5L371.84 750.7L371.05 738.8L370.31 727.0L369.61 715.2L368.95 703.4L368.33 691.5L367.76 679.7L367.23 667.9L366.74 656.0L366.29 644.2L365.89 632.4L365.50 620.6L365.16 608.7L364.86 596.9L364.61 585.1L364.39 573.3L364.22 561.4L364.09 549.6L364.01 537.8L363.96 525.9L363.96 514.1L364.00 502.3L364.09 490.5L364.21 478.6L364.38 466.8L364.55 455.0L364.74 443.2L364.96 431.3L365.23 419.5L365.54 407.7L365.89 395.9L366.29 384.0L366.73 372.2L367.21 360.4L367.73 348.5L368.29 336.7L368.90 324.9L369.55 313.1L370.24 301.2L370.98 289.4L371.76 277.6L372.58 265.8L373.45 253.9L374.35 242.1L375.30 230.3L376.30 218.4L377.33 206.6L378.41 194.8L379.53 183.0L380.69 171.1L381.89 159.3ZM399.07 265.8L397.97 277.6L396.92 289.4L395.91 301.2L394.95 313.1L394.03 324.9L393.15 336.7L392.32 348.5L391.54 360.4L390.80 372.2L390.11 384.0L389.46 395.9L388.86 407.7L388.31 419.5L387.80 431.3L387.33 443.2L386.91 455.0L386.58 466.8L386.33 478.6L386.13 490.5L385.97 502.3L385.86 514.1L385.79 525.9L385.77 537.8L385.79 549.6L385.86 561.4L385.98 573.3L386.14 585.1L386.35 596.9L386.60 608.7L386.90 620.6L387.24 632.4L387.65 644.2L388.11 656.0L388.62 667.9L389.18 679.7L389.78 691.5L390.42 703.4L391.11 715.2L391.85 727.0L392.63 738.8L393.46 750.7L394.34 762.5L395.30 774.3L396.30 786.1L397.35 798.0L398.44 809.8L399.58 809.8L398.63 798.0L397.73 786.1L396.88 774.3L396.07 762.5L395.27 750.7L394.52 738.8L393.80 727.0L393.13 715.2L392.51 703.4L391.93 691.5L391.40 679.7L390.91 667.9L390.47 656.0L390.08 644.2L389.72 632.4L389.38 620.6L389.09 608.7L388.85 596.9L388.65 585.1L388.50 573.3L388.39 561.4L388.33 549.6L388.31 537.8L388.34 525.9L388.41 514.1L388.53 502.3L388.69 490.5L388.90 478.6L389.16 466.8L389.42 455.0L389.68 443.2L389.99 431.3L390.35 419.5L390.75 407.7L391.20 395.9L391.69 384.0L392.23 372.2L392.81 360.4L393.44 348.5L394.11 336.7L394.83 324.9L395.60 313.1L396.41 301.2L397.26 289.4L398.17 277.6L399.12 265.8ZM428.65 253.9L427.39 265.8L426.17 277.6L425.00 289.4L423.90 301.2L422.86 313.1L421.86 324.9L420.90 336.7L420.00 348.5L419.14 360.4L418.33 372.2L417.57 384.0L416.85 395.9L416.19 407.7L415.57 419.5L415.00 431.3L414.47 443.2L414.00 455.0L413.60 466.8L413.29 478.6L413.02 490.5L412.80 502.3L412.62 514.1L412.50 525.9L412.42 537.8L412.39 549.6L412.40 561.4L412.47 573.3L412.58 585.1L412.74 596.9L412.95 608.7L413.21 620.6L413.51 632.4L413.87 644.2L414.28 656.0L414.73 667.9L415.23 679.7L415.79 691.5L416.38 703.4L417.03 715.2L417.73 727.0L418.47 738.8L419.26 750.7L420.11 762.5L421.06 774.3L422.06 786.1L423.11 798.0L424.20 809.8L424.82 809.8L423.90 798.0L423.02 786.1L422.20 774.3L421.42 762.5L420.63 750.7L419.88 738.8L419.18 727.0L418.52 715.2L417.92 703.4L417.36 691.5L416.84 679.7L416.38 667.9L415.96 656.0L415.59 644.2L415.27 632.4L414.99 620.6L414.75 608.7L414.57 596.9L414.43 585.1L414.34 573.3L414.29 561.4L414.30 549.6L414.35 537.8L414.45 525.9L414.59 514.1L414.79 502.3L415.03 490.5L415.32 478.6L415.66 466.8L416.01 455.0L416.38 443.2L416.80 431.3L417.27 419.5L417.78 407.7L418.34 395.9L418.95 384.0L419.61 372.2L420.31 360.4L421.07 348.5L421.86 336.7L422.71 324.9L423.61 313.1L424.55 301.2L425.54 289.4L426.56 277.6L427.62 265.8L428.72 253.9ZM455.77 289.4L454.55 301.2L453.37 313.1L452.24 324.9L451.17 336.7L450.14 348.5L449.16 360.4L448.22 372.2L447.34 384.0L446.51 395.9L445.72 407.7L444.98 419.5L444.30 431.3L443.66 443.2L443.07 455.0L442.55 466.8L442.12 478.6L441.74 490.5L441.40 502.3L441.11 514.1L440.88 525.9L440.69 537.8L440.55 549.6L440.45 561.4L440.41 573.3L440.42 585.1L440.47 596.9L440.57 608.7L440.72 620.6L440.93 632.4L441.18 644.2L441.49 656.0L441.84 667.9L442.24 679.7L442.70 691.5L443.20 703.4L443.75 715.2L444.34 727.0L444.99 738.8L445.69 750.7L446.45 762.5L447.31 774.3L448.23 786.1L449.19 798.0L450.20 809.8L450.61 809.8L449.77 798.0L448.98 786.1L448.24 774.3L447.55 762.5L446.85 750.7L446.18 738.8L445.56 727.0L444.99 715.2L444.47 703.4L444.00 691.5L443.58 679.7L443.21 667.9L442.88 656.0L442.60 644.2L442.37 632.4L442.19 620.6L442.05 608.7L441.96 596.9L441.92 585.1L441.93 573.3L441.99 561.4L442.09 549.6L442.25 537.8L442.45 525.9L442.70 514.1L443.01 502.3L443.36 490.5L443.75 478.6L444.20 466.8L444.67 455.0L445.15 443.2L445.69 431.3L446.27 419.5L446.90 407.7L447.58 395.9L448.31 384.0L449.09 372.2L449.92 360.4L450.79 348.5L451.71 336.7L452.69 324.9L453.71 313.1L454.78 301.2L455.90 289.4ZM484.49 324.9L483.25 336.7L482.07 348.5L480.93 360.4L479.85 372.2L478.81 384.0L477.83 395.9L476.90 407.7L476.02 419.5L475.19 431.3L474.41 443.2L473.69 455.0L473.05 466.8L472.50 478.6L472.00 490.5L471.55 502.3L471.15 514.1L470.80 525.9L470.51 537.8L470.26 549.6L470.07 561.4L469.93 573.3L469.84 585.1L469.80 596.9L469.81 608.7L469.87 620.6L469.98 632.4L470.16 644.2L470.38 656.0L470.65 667.9L470.98 679.7L471.36 691.5L471.79 703.4L472.26 715.2L472.80 727.0L473.38 738.8L474.01 750.7L474.71 762.5L475.53 774.3L476.40 786.1L477.33 798.0L478.29 809.8L478.50 809.8L477.72 798.0L477.00 786.1L476.33 774.3L475.71 762.5L475.07 750.7L474.46 738.8L473.91 727.0L473.41 715.2L472.96 703.4L472.56 691.5L472.21 679.7L471.92 667.9L471.67 656.0L471.48 644.2L471.33 632.4L471.23 620.6L471.18 608.7L471.19 596.9L471.24 585.1L471.34 573.3L471.50 561.4L471.71 549.6L471.97 537.8L472.28 525.9L472.64 514.1L473.05 502.3L473.51 490.5L474.03 478.6L474.59 466.8L475.18 455.0L475.77 443.2L476.42 431.3L477.12 419.5L477.87 407.7L478.67 395.9L479.52 384.0L480.42 372.2L481.38 360.4L482.38 348.5L483.44 336.7L484.55 324.9ZM513.07 384.0L511.85 395.9L510.69 407.7L509.58 419.5L508.53 431.3L507.54 443.2L506.60 455.0L505.76 466.8L505.02 478.6L504.34 490.5L503.71 502.3L503.14 514.1L502.62 525.9L502.16 537.8L501.76 549.6L501.42 561.4L501.14 573.3L500.91 585.1L500.74 596.9L500.62 608.7L500.57 620.6L500.57 632.4L500.64 644.2L500.77 656.0L500.96 667.9L501.20 679.7L501.51 691.5L501.87 703.4L502.28 715.2L502.76 727.0L503.29 738.8L503.88 750.7L504.54 762.5L505.34 774.3L506.19 786.1L507.09 798.0L507.19 798.0L506.49 786.1L505.86 774.3L505.28 762.5L504.68 750.7L504.13 738.8L503.63 727.0L503.19 715.2L502.81 703.4L502.48 691.5L502.21 679.7L502.00 667.9L501.84 656.0L501.75 644.2L501.70 632.4L501.70 620.6L501.76 608.7L501.87 596.9L502.04 585.1L502.27 573.3L502.56 561.4L502.90 549.6L503.30 537.8L503.76 525.9L504.27 514.1L504.85 502.3L505.47 490.5L506.16 478.6L506.90 466.8L507.67 455.0L508.45 443.2L509.28 431.3L510.18 419.5L511.13 407.7L512.14 395.9L513.20 384.0ZM538.14 514.1L537.51 525.9L536.94 537.8L536.42 549.6L535.96 561.4L535.56 573.3L535.21 585.1L534.92 596.9L534.69 608.7L534.52 620.6L534.40 632.4L534.39 644.2L534.45 656.0L534.56 667.9L534.74 679.7L534.97 691.5L535.25 703.4L535.60 715.2L536.00 727.0L536.45 738.8L536.97 750.7L537.56 762.5L537.72 762.5L537.22 750.7L536.76 738.8L536.35 727.0L536.01 715.2L535.72 703.4L535.48 691.5L535.31 679.7L535.19 667.9L535.12 656.0L535.12 644.2L535.16 632.4L535.20 620.6L535.30 608.7L535.46 596.9L535.68 585.1L535.95 573.3L536.28 561.4L536.66 549.6L537.11 537.8L537.61 525.9L538.16 514.1Z" fill="#ffffff"/>
</g>
<rect x="179.0" y="113.0" width="496.9" height="695.8" fill="none" stroke="#000" stroke-width="1.5"/>
<line x1="179.00" y1="808.8" x2="179.00" y2="816.1999999999999" stroke="#000" stroke-width="1.9"/>
<text x="179.0" y="832.2" font-size="9.85" text-anchor="middle">0</text>
<line x1="236.99" y1="808.8" x2="236.99" y2="816.1999999999999" stroke="#000" stroke-width="1.9"/>
<text x="236.99" y="832.2" font-size="9.85" text-anchor="middle">250</text>
<line x1="294.98" y1="808.8" x2="294.98" y2="816.1999999999999" stroke="#000" stroke-width="1.9"/>
<text x="294.98" y="832.2" font-size="9.85" text-anchor="middle">500</text>
<line x1="352.96" y1="808.8" x2="352.96" y2="816.1999999999999" stroke="#000" stroke-width="1.9"/>
<text x="352.96" y="832.2" font-size="9.85" text-anchor="middle">750</text>
<line x1="410.95" y1="808.8" x2="410.95" y2="816.1999999999999" stroke="#000" stroke-width="1.9"/>
<text x="410.95" y="832.2" font-size="9.85" text-anchor="middle">1000</text>
<line x1="468.94" y1="808.8" x2="468.94" y2="816.1999999999999" stroke="#000" stroke-width="1.9"/>
<text x="468.94" y="832.2" font-size="9.85" text-anchor="middle">1250</text>
<line x1="526.92" y1="808.8" x2="526.92" y2="816.1999999999999" stroke="#000" stroke-width="1.9"/>
<text x="526.92" y="832.2" font-size="9.85" text-anchor="middle">1500</text>
<line x1="584.91" y1="808.8" x2="584.91" y2="816.1999999999999" stroke="#000" stroke-width="1.9"/>
<text x="584.91" y="832.2" font-size="9.85" text-anchor="middle">1750</text>
<line x1="642.90" y1="808.8" x2="642.90" y2="816.1999999999999" stroke="#000" stroke-width="1.9"/>
<text x="642.9" y="832.2" font-size="9.85" text-anchor="middle">2000</text>
<line x1="179.0" y1="808.80" x2="171.6" y2="808.80" stroke="#000" stroke-width="1.9"/>
<text x="164.2" y="812.9" font-size="9.85" text-anchor="end">0</text>
<line x1="179.0" y1="692.83" x2="171.6" y2="692.83" stroke="#000" stroke-width="1.9"/>
<text x="164.2" y="696.93" font-size="9.85" text-anchor="end">500</text>
<line x1="179.0" y1="576.87" x2="171.6" y2="576.87" stroke="#000" stroke-width="1.9"/>
<text x="164.2" y="580.97" font-size="9.85" text-anchor="end">1000</text>
<line x1="179.0" y1="460.90" x2="171.6" y2="460.90" stroke="#000" stroke-width="1.9"/>
<text x="164.2" y="465.0" font-size="9.85" text-anchor="end">1500</text>
<line x1="179.0" y1="344.93" x2="171.6" y2="344.93" stroke="#000" stroke-width="1.9"/>
<text x="164.2" y="349.03" font-size="9.85" text-anchor="end">2000</text>
<line x1="179.0" y1="228.97" x2="171.6" y2="228.97" stroke="#000" stroke-width="1.9"/>
<text x="164.2" y="233.07" font-size="9.85" text-anchor="end">2500</text>
<line x1="179.0" y1="113.00" x2="171.6" y2="113.00" stroke="#000" stroke-width="1.9"/>
<text x="164.2" y="117.1" font-size="9.85" text-anchor="end">3000</text>
<text x="427.4" y="849.6" font-size="10.45" text-anchor="middle">X</text>
<text x="125.6" y="461.3" font-size="10.45" text-anchor="middle" transform="rotate(-90 125.6 461.3)">Y</text>
<line x1="174" y1="461.5" x2="682" y2="461.5" stroke="#0000ff" stroke-width="1.1"/>
<line x1="427.5" y1="106" x2="427.5" y2="816.3" stroke="#0000ff" stroke-width="1.1"/>
<rect x="711.9" y="113.0" width="35.0" height="695.8" fill="url(#cb)" stroke="#000" stroke-width="1.5"/>
<line x1="746.9" y1="715.00" x2="753.6999999999999" y2="715.00" stroke="#000" stroke-width="1.9"/>
<text x="762.2" y="718.6" font-size="9.85" text-anchor="start">600</text>
<line x1="746.9" y1="591.00" x2="753.6999999999999" y2="591.00" stroke="#000" stroke-width="1.9"/>
<text x="762.2" y="594.6" font-size="9.85" text-anchor="start">800</text>
<line x1="746.9" y1="467.00" x2="753.6999999999999" y2="467.00" stroke="#000" stroke-width="1.9"/>
<text x="762.2" y="470.6" font-size="9.85" text-anchor="start">1000</text>
<line x1="746.9" y1="343.00" x2="753.6999999999999" y2="343.00" stroke="#000" stroke-width="1.9"/>
<text x="762.2" y="346.6" font-size="9.85" text-anchor="start">1200</text>
<line x1="746.9" y1="219.00" x2="753.6999999999999" y2="219.00" stroke="#000" stroke-width="1.9"/>
<text x="762.2" y="222.6" font-size="9.85" text-anchor="start">1400</text>
<rect x="911.2" y="112.8" width="273.79999999999995" height="120.10000000000001" fill="#fff" stroke="#000" stroke-width="1.35"/>
<path d="M912.2 232.9 L929.9 232.6 L929.9 118.9 L935.8 118.9 L935.8 139.8 L941.1 139.8 L941.1 154.9 L947.1 154.9 L947.1 159.7 L952.9 159.7 L952.9 162.9 L958.0 162.9 L958.0 165.8 L964.1 165.8 L964.1 168.1 L969.3 168.1 L969.3 169.0 L975.0 169.0 L975.0 170.0 L980.8 170.0 L980.8 171.0 L986.6 171.0 L986.6 172.1 L991.7 172.1 L991.7 173.1 L997.9 173.1 L997.9 174.0 L1003.3 174.0 L1003.3 175.0 L1009.4 175.0 L1009.4 176.0 L1024.7 176.0 L1024.7 177.9 L1031.6 177.9 L1031.6 178.8 L1047.7 178.8 L1047.7 179.8 L1053.1 179.8 L1053.1 180.9 L1064.0 180.9 L1064.0 183.7 L1070.5 183.7 L1070.5 184.8 L1076.1 184.8 L1076.1 183.8 L1081.2 183.8 L1081.2 184.8 L1086.5 184.8 L1086.5 186.7 L1091.8 186.7 L1091.8 195.1 L1097.8 195.1 L1097.8 232.6 L1184.5 232.9" fill="none" stroke="#0000ff" stroke-width="1.7" stroke-linejoin="miter"/>
<rect x="911.2" y="112.8" width="273.79999999999995" height="120.10000000000001" fill="none" stroke="#000" stroke-width="1.35"/>
<line x1="934.10" y1="232.9" x2="934.10" y2="240.3" stroke="#000" stroke-width="1.9"/>
<text x="934.6" y="255.7" font-size="9.85" text-anchor="middle">0</text>
<line x1="973.50" y1="232.9" x2="973.50" y2="240.3" stroke="#000" stroke-width="1.9"/>
<line x1="1012.90" y1="232.9" x2="1012.90" y2="240.3" stroke="#000" stroke-width="1.9"/>
<text x="1013.4" y="255.7" font-size="9.85" text-anchor="middle">20000</text>
<line x1="1052.30" y1="232.9" x2="1052.30" y2="240.3" stroke="#000" stroke-width="1.9"/>
<line x1="1091.70" y1="232.9" x2="1091.70" y2="240.3" stroke="#000" stroke-width="1.9"/>
<text x="1092.2" y="255.7" font-size="9.85" text-anchor="middle">40000</text>
<line x1="1131.10" y1="232.9" x2="1131.10" y2="240.3" stroke="#000" stroke-width="1.9"/>
<line x1="1170.50" y1="232.9" x2="1170.50" y2="240.3" stroke="#000" stroke-width="1.9"/>
<text x="1171.0" y="255.7" font-size="9.85" text-anchor="middle">60000</text>
<line x1="911.2" y1="232.60" x2="903.8000000000001" y2="232.60" stroke="#000" stroke-width="1.9"/>
<text x="895.9" y="236.5" font-size="9.85" text-anchor="end">0</text>
<line x1="911.2" y1="199.00" x2="903.8000000000001" y2="199.00" stroke="#000" stroke-width="1.9"/>
<text x="895.9" y="202.9" font-size="9.85" text-anchor="end">2</text>
<line x1="911.2" y1="165.40" x2="903.8000000000001" y2="165.40" stroke="#000" stroke-width="1.9"/>
<text x="895.9" y="169.3" font-size="9.85" text-anchor="end">4</text>
<line x1="911.2" y1="131.80" x2="903.8000000000001" y2="131.80" stroke="#000" stroke-width="1.9"/>
<text x="895.9" y="135.7" font-size="9.85" text-anchor="end">6</text>
<text x="1048" y="273.5" font-size="10.45" text-anchor="middle">counts</text>
<text x="878.5" y="174.0" font-size="10.45" text-anchor="middle" transform="rotate(-90 878.5 174.0)">log frequency</text>
<text x="1193.7" y="174.9" font-size="10.45" text-anchor="middle" transform="rotate(90 1193.7 174.9)">histogram (detail)</text>
<rect x="911.2" y="285.2" width="273.79999999999995" height="119.69999999999999" fill="#fff" stroke="#000" stroke-width="1.35"/>
<path d="M912.2 404.9 L924.9 404.7 L924.9 318.9 L929.9 318.9 L929.9 290.9 L935.8 290.9 L935.8 326.9 L941.1 326.9 L941.1 331.7 L947.1 331.7 L947.1 335.9 L952.9 335.9 L952.9 339.0 L958.8 339.0 L958.8 339.9 L964.1 339.9 L964.1 340.9 L969.3 340.9 L969.3 342.7 L975.0 342.7 L975.0 343.8 L980.8 343.8 L980.8 344.7 L986.6 344.7 L986.6 345.7 L991.7 345.7 L991.7 346.7 L997.9 346.7 L997.9 347.8 L1013.9 347.8 L1013.9 348.8 L1019.4 348.8 L1019.4 349.7 L1025.2 349.7 L1025.2 350.7 L1036.7 350.7 L1036.7 351.8 L1042.3 351.8 L1042.3 352.9 L1052.8 352.9 L1052.8 355.7 L1059.2 355.7 L1059.2 356.8 L1064.0 356.8 L1064.0 355.8 L1069.7 355.8 L1069.7 357.9 L1075.8 357.9 L1075.8 360.8 L1081.2 360.8 L1081.2 377.5 L1087.0 377.5 L1087.0 404.7 L1184.5 404.9" fill="none" stroke="#0000ff" stroke-width="1.7" stroke-linejoin="miter"/>
<rect x="911.2" y="285.2" width="273.79999999999995" height="119.69999999999999" fill="none" stroke="#000" stroke-width="1.35"/>
<line x1="929.30" y1="404.9" x2="929.30" y2="412.29999999999995" stroke="#000" stroke-width="1.9"/>
<text x="929.8" y="427.8" font-size="9.85" text-anchor="middle">0</text>
<line x1="966.50" y1="404.9" x2="966.50" y2="412.29999999999995" stroke="#000" stroke-width="1.9"/>
<line x1="1003.70" y1="404.9" x2="1003.70" y2="412.29999999999995" stroke="#000" stroke-width="1.9"/>
<text x="1004.2" y="427.8" font-size="9.85" text-anchor="middle">20000</text>
<line x1="1040.90" y1="404.9" x2="1040.90" y2="412.29999999999995" stroke="#000" stroke-width="1.9"/>
<line x1="1078.10" y1="404.9" x2="1078.10" y2="412.29999999999995" stroke="#000" stroke-width="1.9"/>
<text x="1078.6" y="427.8" font-size="9.85" text-anchor="middle">40000</text>
<line x1="1115.30" y1="404.9" x2="1115.30" y2="412.29999999999995" stroke="#000" stroke-width="1.9"/>
<line x1="1152.50" y1="404.9" x2="1152.50" y2="412.29999999999995" stroke="#000" stroke-width="1.9"/>
<text x="1153.0" y="427.8" font-size="9.85" text-anchor="middle">60000</text>
<line x1="911.2" y1="404.70" x2="903.8000000000001" y2="404.70" stroke="#000" stroke-width="1.9"/>
<text x="895.9" y="408.6" font-size="9.85" text-anchor="end">0</text>
<line x1="911.2" y1="371.10" x2="903.8000000000001" y2="371.10" stroke="#000" stroke-width="1.9"/>
<text x="895.9" y="375.0" font-size="9.85" text-anchor="end">2</text>
<line x1="911.2" y1="337.50" x2="903.8000000000001" y2="337.50" stroke="#000" stroke-width="1.9"/>
<text x="895.9" y="341.4" font-size="9.85" text-anchor="end">4</text>
<line x1="911.2" y1="303.90" x2="903.8000000000001" y2="303.90" stroke="#000" stroke-width="1.9"/>
<text x="895.9" y="307.8" font-size="9.85" text-anchor="end">6</text>
<text x="1048" y="445.5" font-size="10.45" text-anchor="middle">counts</text>
<text x="878.5" y="346.4" font-size="10.45" text-anchor="middle" transform="rotate(-90 878.5 346.4)">log frequency</text>
<text x="1193.7" y="347.2" font-size="10.45" text-anchor="middle" transform="rotate(90 1193.7 347.2)">histogram (full)</text>
<rect x="911.2" y="516.9" width="273.79999999999995" height="120.0" fill="#fff" stroke="#000" stroke-width="1.35"/>
<path d="M911.9000000000001 624.8 L954.8 624.8 L955.25 619.8 L955.75 619.8 L956.2 624.8 L964.5 624.8 L964.95 572.3 L965.45 572.3 L965.9 624.8 L975.3 624.8 L975.75 561.3 L976.25 561.3 L976.7 624.8 L986.7 624.8 L987.15 561.3 L987.65 561.3 L988.1 624.8 L998.4 624.8 L998.85 606.8 L999.35 606.8 L999.8 624.8 L1011.4 624.8 L1011.85 612.4 L1012.35 612.4 L1012.8 624.8 L1025.1 624.8 L1025.55 608.1 L1026.05 608.1 L1026.5 624.8 L1039.7 624.8 L1040.15 613.0 L1040.65 613.0 L1041.1 624.8 L1055.3 624.8 L1055.75 617.2 L1056.25 617.2 L1056.7 624.8 L1072.2 624.8 L1072.65 619.5 L1073.15 619.5 L1073.6 624.8 L1089.8 624.8 L1090.25 621.1 L1090.75 621.1 L1091.2 624.8 L1109.0 624.8 L1109.45 623.4 L1109.95 623.4 L1110.4 624.8 L1184.3 624.8" fill="none" stroke="#0000ff" stroke-width="1.3" stroke-linejoin="round"/>
<rect x="911.2" y="516.9" width="273.79999999999995" height="120.0" fill="none" stroke="#000" stroke-width="1.35"/>
<line x1="911.90" y1="636.9" x2="911.90" y2="644.3" stroke="#000" stroke-width="1.9"/>
<text x="912.3" y="659.4" font-size="9.85" text-anchor="middle">0</text>
<line x1="975.18" y1="636.9" x2="975.18" y2="644.3" stroke="#000" stroke-width="1.9"/>
<text x="975.58" y="659.4" font-size="9.85" text-anchor="middle">500</text>
<line x1="1038.46" y1="636.9" x2="1038.46" y2="644.3" stroke="#000" stroke-width="1.9"/>
<text x="1038.86" y="659.4" font-size="9.85" text-anchor="middle">1000</text>
<line x1="1101.74" y1="636.9" x2="1101.74" y2="644.3" stroke="#000" stroke-width="1.9"/>
<text x="1102.14" y="659.4" font-size="9.85" text-anchor="middle">1500</text>
<line x1="1165.02" y1="636.9" x2="1165.02" y2="644.3" stroke="#000" stroke-width="1.9"/>
<text x="1165.42" y="659.4" font-size="9.85" text-anchor="middle">2000</text>
<line x1="911.2" y1="626.90" x2="903.8000000000001" y2="626.90" stroke="#000" stroke-width="1.9"/>
<text x="895.9" y="630.8" font-size="9.85" text-anchor="end">0</text>
<line x1="911.2" y1="592.25" x2="903.8000000000001" y2="592.25" stroke="#000" stroke-width="1.9"/>
<text x="895.9" y="596.15" font-size="9.85" text-anchor="end">20000</text>
<line x1="911.2" y1="557.60" x2="903.8000000000001" y2="557.60" stroke="#000" stroke-width="1.9"/>
<text x="895.9" y="561.5" font-size="9.85" text-anchor="end">40000</text>
<line x1="911.2" y1="522.95" x2="903.8000000000001" y2="522.95" stroke="#000" stroke-width="1.9"/>
<text x="895.9" y="526.85" font-size="9.85" text-anchor="end">60000</text>
<text x="1048" y="677.7" font-size="10.45" text-anchor="middle">X</text>
<text x="853" y="577.6" font-size="10.45" text-anchor="middle" transform="rotate(-90 853 577.6)">counts</text>
<text x="1193.7" y="577.5" font-size="10.45" text-anchor="middle" transform="rotate(90 1193.7 577.5)">cut in x</text>
<rect x="1108.7" y="519.4" width="73.5" height="16.5" rx="2" ry="2" fill="#fff" fill-opacity="0.8" stroke="#cccccc" stroke-width="1"/>
<line x1="1111.2" y1="527.9" x2="1133.9" y2="527.9" stroke="#0000ff" stroke-width="1.8"/>
<text x="1138.3" y="531" font-size="10.25" text-anchor="start">y=1500</text>
<rect x="911.2" y="689.0" width="273.79999999999995" height="119.79999999999995" fill="#fff" stroke="#000" stroke-width="1.35"/>
<path d="M911.9000000000001 797.0 L1122 797.0 L1123.6 796.3 L1125.6 796.3 L1127.5 797.0 L1184.3 797.0" fill="none" stroke="#0000ff" stroke-width="1.3" stroke-linejoin="round"/>
<rect x="911.2" y="689.0" width="273.79999999999995" height="119.79999999999995" fill="none" stroke="#000" stroke-width="1.35"/>
<line x1="911.90" y1="808.8" x2="911.90" y2="816.1999999999999" stroke="#000" stroke-width="1.9"/>
<text x="911.9" y="832.2" font-size="9.85" text-anchor="middle">0</text>
<line x1="957.23" y1="808.8" x2="957.23" y2="816.1999999999999" stroke="#000" stroke-width="1.9"/>
<text x="957.23" y="832.2" font-size="9.85" text-anchor="middle">500</text>
<line x1="1002.57" y1="808.8" x2="1002.57" y2="816.1999999999999" stroke="#000" stroke-width="1.9"/>
<text x="1002.57" y="832.2" font-size="9.85" text-anchor="middle">1000</text>
<line x1="1047.90" y1="808.8" x2="1047.90" y2="816.1999999999999" stroke="#000" stroke-width="1.9"/>
<text x="1047.9" y="832.2" font-size="9.85" text-anchor="middle">1500</text>
<line x1="1093.23" y1="808.8" x2="1093.23" y2="816.1999999999999" stroke="#000" stroke-width="1.9"/>
<text x="1093.23" y="832.2" font-size="9.85" text-anchor="middle">2000</text>
<line x1="1138.57" y1="808.8" x2="1138.57" y2="816.1999999999999" stroke="#000" stroke-width="1.9"/>
<text x="1138.57" y="832.2" font-size="9.85" text-anchor="middle">2500</text>
<line x1="1183.90" y1="808.8" x2="1183.90" y2="816.1999999999999" stroke="#000" stroke-width="1.9"/>
<text x="1183.9" y="832.2" font-size="9.85" text-anchor="middle">3000</text>
<line x1="911.2" y1="799.00" x2="903.8000000000001" y2="799.00" stroke="#000" stroke-width="1.9"/>
<text x="895.9" y="802.9" font-size="9.85" text-anchor="end">0</text>
<line x1="911.2" y1="764.35" x2="903.8000000000001" y2="764.35" stroke="#000" stroke-width="1.9"/>
<text x="895.9" y="768.25" font-size="9.85" text-anchor="end">20000</text>
<line x1="911.2" y1="729.70" x2="903.8000000000001" y2="729.70" stroke="#000" stroke-width="1.9"/>
<text x="895.9" y="733.6" font-size="9.85" text-anchor="end">40000</text>
<line x1="911.2" y1="695.05" x2="903.8000000000001" y2="695.05" stroke="#000" stroke-width="1.9"/>
<text x="895.9" y="698.95" font-size="9.85" text-anchor="end">60000</text>
<text x="1049" y="849.6" font-size="10.45" text-anchor="middle">Y</text>
<text x="853" y="749.6" font-size="10.45" text-anchor="middle" transform="rotate(-90 853 749.6)">counts</text>
<text x="1193.7" y="749.5" font-size="10.45" text-anchor="middle" transform="rotate(90 1193.7 749.5)">cut in y</text>
<rect x="1108.7" y="691.4" width="73.5" height="16.5" rx="2" ry="2" fill="#fff" fill-opacity="0.8" stroke="#cccccc" stroke-width="1"/>
<line x1="1111.2" y1="699.9" x2="1133.9" y2="699.9" stroke="#0000ff" stroke-width="1.8"/>
<text x="1138.3" y="703" font-size="10.25" text-anchor="start">x=1072</text>
</svg></body></html>
